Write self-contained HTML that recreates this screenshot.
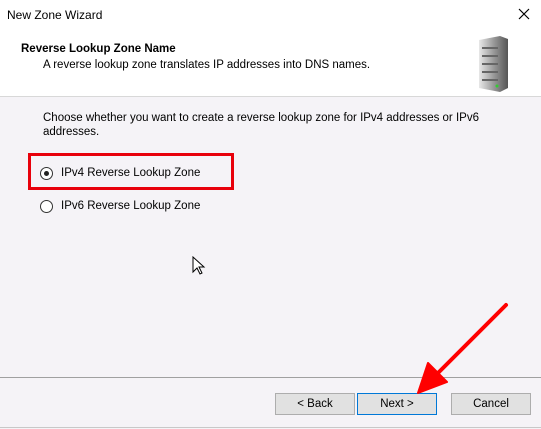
<!DOCTYPE html>
<html><head><style>
body{margin:0;width:541px;height:429px;background:#f5f3f7;font-family:"Liberation Sans",sans-serif;font-size:11.5px;color:#000;position:relative;overflow:hidden}
.a{position:absolute;white-space:nowrap}
.hdr{position:absolute;left:0;top:0;width:541px;height:96px;background:#fff;border-bottom:1px solid #d8d8d8}
.btn{position:absolute;top:393px;height:20px;width:78px;border:1px solid #adadad;background:#e1e1e1;text-align:center;line-height:20px;font-size:11.5px}
.rad{position:absolute;width:11px;height:11px;border:1px solid #333;border-radius:50%;background:#fff}
</style></head><body>
<div class="hdr"></div>
<div class="a" style="left:7px;top:8px;font-size:12px">New Zone Wizard</div>
<svg class="a" style="left:518px;top:8px" width="12" height="12"><path d="M1 1L11 11M11 1L1 11" stroke="#000" stroke-width="1.2"/></svg>
<div class="a" style="left:21px;top:43px;font-weight:bold;font-size:11.5px">Reverse Lookup Zone Name</div>
<div class="a" style="left:43px;top:59px">A reverse lookup zone translates IP addresses into DNS names.</div>
<svg class="a" style="left:476px;top:36px" width="34" height="57">
<defs><linearGradient id="g" x1="0" x2="1"><stop offset="0" stop-color="#e8e8e8"/><stop offset=".5" stop-color="#9a9a9a"/><stop offset="1" stop-color="#555"/></linearGradient></defs>
<path d="M3 4L24 0L32 3L32 52L24 56L3 52Z" fill="url(#g)"/>
<path d="M6 12H22M6 20H22M6 28H22M6 36H22M6 44H22" stroke="#666" stroke-width="2"/>
<circle cx="21" cy="50" r="1.5" fill="#3c3"/>
</svg>
<div class="a" style="left:43px;top:112px">Choose whether you want to create a reverse lookup zone for IPv4 addresses or IPv6</div>
<div class="a" style="left:43px;top:126px">addresses.</div>
<div class="a" style="left:28px;top:153px;width:200px;height:31px;border:3px solid #e8000b"></div>
<div class="rad" style="left:40px;top:167px"></div>
<div class="a" style="left:44px;top:171px;width:5px;height:5px;border-radius:50%;background:#222"></div>
<div class="a" style="left:61px;top:167px">IPv4 Reverse Lookup Zone</div>
<div class="rad" style="left:40px;top:200px"></div>
<div class="a" style="left:61px;top:200px">IPv6 Reverse Lookup Zone</div>
<svg class="a" style="left:192px;top:256px" width="14" height="20"><path d="M1 1V16L5 12L8 18L10 17L7 11H12Z" fill="#fff" stroke="#000"/></svg>
<div class="a" style="left:0;top:377px;width:541px;height:1px;background:#a0a0a0"></div>
<div class="btn" style="left:275px">&lt; Back</div>
<div class="btn" style="left:357px;border-color:#0078d7">Next &gt;</div>
<div class="btn" style="left:451px">Cancel</div>
<div class="a" style="left:0;top:427px;width:541px;height:1px;background:#c8c8c8"></div>
<svg class="a" style="left:0;top:0" width="541" height="429"><path d="M506 305L438 373" stroke="#f00" stroke-width="4" stroke-linecap="round"/><path d="M418 393L428 363L447 382Z" fill="#f00" stroke="#f00" stroke-width="2" stroke-linejoin="round"/></svg>
</body></html>
